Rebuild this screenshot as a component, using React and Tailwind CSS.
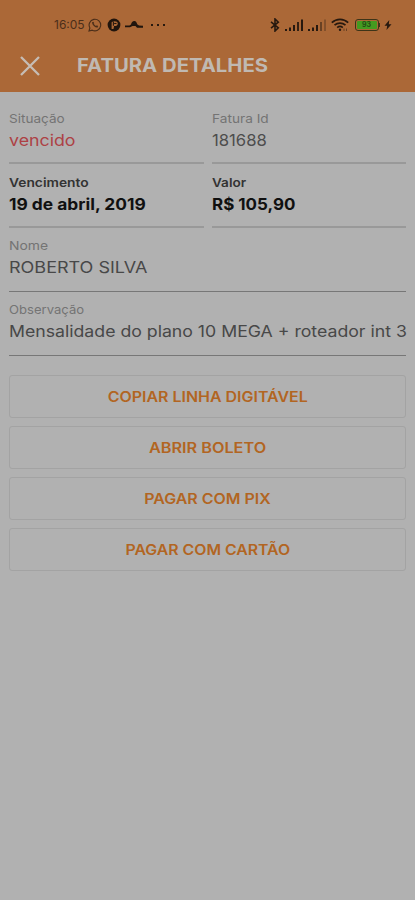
import React from 'react';
import clsx from 'clsx';

const fields = [
    { label: 'Situação', value: 'vencido', labelClass: 'scale-x-[1.13]', valueClass: 'text-[#ad4145] scale-x-[1.11]' },
    { label: 'Fatura Id', value: '181688', labelClass: 'scale-x-[1.14]', valueClass: 'text-[#4d4d4d] scale-x-[1.04]' },
    { label: 'Vencimento', value: '19 de abril, 2019', strong: true, labelClass: 'scale-x-[1.15]', valueClass: 'scale-x-[1.085]' },
    { label: 'Valor', value: 'R$ 105,90', strong: true, labelClass: 'scale-x-[1.13]', valueClass: 'scale-x-[1.06]' },
    { label: 'Nome', value: 'ROBERTO SILVA', wide: true, labelClass: 'scale-x-[1.16]', valueClass: 'text-[#484848] scale-x-[1.125]' },
    { label: 'Observação', value: 'Mensalidade do plano 10 MEGA + roteador int 3', wide: true, labelClass: 'scale-x-[1.09]', valueClass: 'text-[#484848] scale-x-[1.105]' },
];

const actions = [
    { label: 'COPIAR LINHA DIGITÁVEL', className: 'scale-x-[1.14]' },
    { label: 'ABRIR BOLETO', className: 'scale-x-[1.16]' },
    { label: 'PAGAR COM PIX', className: 'scale-x-[1.14]' },
    { label: 'PAGAR COM CARTÃO', className: 'scale-x-[1.13]' },
];

const WhatsappIcon = () => (
    <svg viewBox="0 0 14 14" className="w-3.5 h-3.5" fill="none" stroke="#4b2e19" strokeWidth="1.1">
        <path d="M1 13l.9-3A5.8 5.8 0 1 1 4.2 12.2z" />
        <path d="M4.8 4.3c-.5 1.8 2.8 5.2 4.9 4.5M4.8 4l.9 1.6M9.9 8.6l-1.6-.8" strokeWidth="1.3" />
    </svg>
);

const CircleAppIcon = () => (
    <svg viewBox="0 0 14 14" className="w-3.5 h-3.5">
        <circle cx="7" cy="7" r="6.4" fill="#21150d" />
        <path d="M4.6 11V4.2C6.5 2.5 10.8 2.8 10.8 5.5c0 2.2-2.3 2.9-3.7 2.500L6.5 11z" fill="#ab6837" />
        <path d="M6.4 3.5v4.3M7.2 5.5h2.3" stroke="#21150d" strokeWidth="1" />
    </svg>
);

const ProviderIcon = () => (
    <svg viewBox="0 0 18 10" className="w-[18px] h-2.5" fill="#21150d">
        <path d="M0 5.500h4.500L6 4.500C6.500 2.500 7.500 1 9.300 1s2.400 1.300 2.900 3.200L14 5.400l4 .4v2h-6L10.500 6h-3L5 7.300H0z" />
    </svg>
);

const BluetoothIcon = () => (
    <svg viewBox="0 0 10 14" className="w-2.5 h-3.5" fill="none" stroke="#27190f" strokeWidth="1.6">
        <path d="M1 3.8l7.3 6L5 13V1l3.3 3.2L1 10.2" />
    </svg>
);

const SignalIcon = ({ weak }) => (
    <svg viewBox="0 0 18 12" className="w-[18px] h-3" fill="#27190f">
        <path d="M0 10h2v2H0zM4 8.5h2V12H4zM8 6h2v6H8z" />
        <path d="M12 3h2v9h-2z" opacity={weak ? 0.5 : 0.9} />
        <path d="M16 .5h2V12h-2z" opacity={weak ? 0.3 : 1} />
    </svg>
);

const WifiIcon = () => (
    <svg viewBox="0 0 18 14" className="w-[18px] h-3.5" fill="none" stroke="#27190f" strokeWidth="1.7">
        <path d="M.8 4.6C5.5.2 12.5.2 17.2 4.6M3.5 7.2c3.2-2.900 7.8-2.900 11 0M6.2 9.6c1.7-1.500 3.9-1.500 5.600 0" />
        <circle cx="9" cy="11.8" r="1.2" fill="#27190f" stroke="none" />
        <path d="M13 10.5v2.5M15.5 10.5v2.5" strokeWidth="1" opacity=".5" />
    </svg>
);

const BoltIcon = () => (
    <svg viewBox="0 0 8 10" className="w-2 h-2.5" fill="#27190f">
        <path d="M5.3 0L.5 5.8h2.7L2.5 10l5-5.8H4.8z" />
    </svg>
);

const StatusBar = () => (
    <div className="h-12 pt-px pl-[54px] pr-[23px] flex items-center">
        <span className="w-[33px] text-[12px] text-[#4b2e19] whitespace-nowrap">16:05</span>
        <div className="flex items-center ml-px">
            <WhatsappIcon />
            <div className="ml-[5px]"><CircleAppIcon /></div>
            <div className="ml-1"><ProviderIcon /></div>
            <div className="ml-2 flex gap-1">
                <i className="size-0.5 bg-[#27190f]" />
                <i className="size-0.5 bg-[#27190f]" />
                <i className="size-0.5 bg-[#27190f]" />
            </div>
        </div>
        <div className="ml-auto flex items-center">
            <BluetoothIcon />
            <div className="ml-[5px]"><SignalIcon /></div>
            <div className="ml-[5px]"><SignalIcon weak /></div>
            <div className="ml-[5px]"><WifiIcon /></div>
            <div className="ml-1.5 w-6 h-3 rounded-[3px] border border-[#3d3418] p-px flex">
                <div className="flex-1 rounded-[1px] bg-[#449b20] text-[7px] leading-[8px] font-bold text-center text-[#244d15]">93</div>
            </div>
            <div className="w-[1.5px] h-1 bg-[#3d3418]" />
            <div className="ml-1"><BoltIcon /></div>
        </div>
    </div>
);

const Field = ({ label, value, strong, wide, labelClass, valueClass }) => (
    <div
        className={clsx(
            'h-16 whitespace-nowrap',
            wide ? 'pt-[9px] col-span-2 border-b border-[#777777]' : 'pt-2.5 border-b-2 border-[#999999]'
        )}
    >
        <div className={clsx('w-fit origin-left text-[12px] leading-[18px]', strong ? 'font-semibold text-[#333333]' : 'text-[#747474]', labelClass)}>
            {label}
        </div>
        <div className={clsx('w-fit origin-left text-[16px] leading-6', strong ? 'font-bold text-[#101010]' : 'font-normal', valueClass)}>
            {value}
        </div>
    </div>
);

const App = () => {
    return (
        <div className="w-full h-[900px] bg-[#b1b1b1] font-['Inter',sans-serif] overflow-hidden">
            <header className="h-[92px] bg-[#ab6837]">
                <StatusBar />
                <div className="h-[35px] flex items-center pl-5">
                    <svg viewBox="0 0 20 20" className="w-5 h-5" fill="none" stroke="#c6bdb5" strokeWidth="2.3">
                        <path d="M1 1l18 18M19 1L1 19" />
                    </svg>
                    <h1 className="ml-[37px] pt-px origin-left scale-x-[1.067] text-[19px] font-bold text-[#c0b9b2] whitespace-nowrap">FATURA DETALHES</h1>
                </div>
            </header>
            <main className="px-[9px]">
                <div className="pt-2 grid grid-cols-2 gap-x-2">
                    {fields.map((field) => (
                        <Field key={field.label} {...field} />
                    ))}
                </div>
                <div className="mt-[19px] flex flex-col gap-2">
                    {actions.map((action) => (
                        <button key={action.label} className="h-[43px] w-full rounded-[3px] border border-[#a3a3a3] text-[14px] font-semibold text-[#b26522]">
                            <span className={clsx('inline-block', action.className)}>{action.label}</span>
                        </button>
                    ))}
                </div>
            </main>
        </div>
    );
};

export default App;
